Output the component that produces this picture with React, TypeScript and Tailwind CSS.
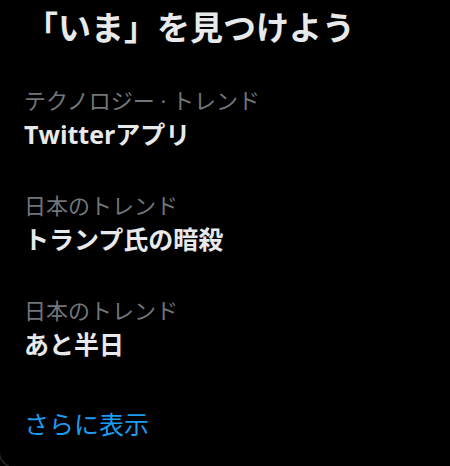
const trends = [
  { category: "テクノロジー · トレンド", name: "Twitterアプリ" },
  { category: "日本のトレンド", name: "トランプ氏の暗殺" },
  { category: "日本のトレンド", name: "あと半日" },
];

export default function App() {
  return (
    <div
      className="h-[466px] w-[450px] overflow-hidden bg-black"
      style={{ fontFamily: '"Open Sans", "Noto Sans CJK JP", sans-serif' }}
    >
      {/* trends panel, left edge tucked just outside the window */}
      <section className="-ml-px h-[468px] w-[470px] rounded-bl-2xl border-b border-l border-[#2f3336]">
        <h2 className="pt-2 pr-6 pb-[18px] pl-[25px] text-[33px] leading-[40px] font-bold text-[#e7e9ea]">
          「いま」を見つけよう
        </h2>

        {trends.map((trend) => (
          <div key={trend.name} className="px-6 py-[19px]">
            <p className="text-[22px] leading-[31px] text-[#71767b]">
              {trend.category}
            </p>
            <p className="text-[25px] leading-[36px] font-bold text-[#e7e9ea]">
              {trend.name}
            </p>
          </div>
        ))}

        <div className="px-6 pt-[28px] pb-[26px]">
          <span className="text-[25px] leading-[30px] text-[#1d9bf0]">
            さらに表示
          </span>
        </div>
      </section>
    </div>
  );
}
